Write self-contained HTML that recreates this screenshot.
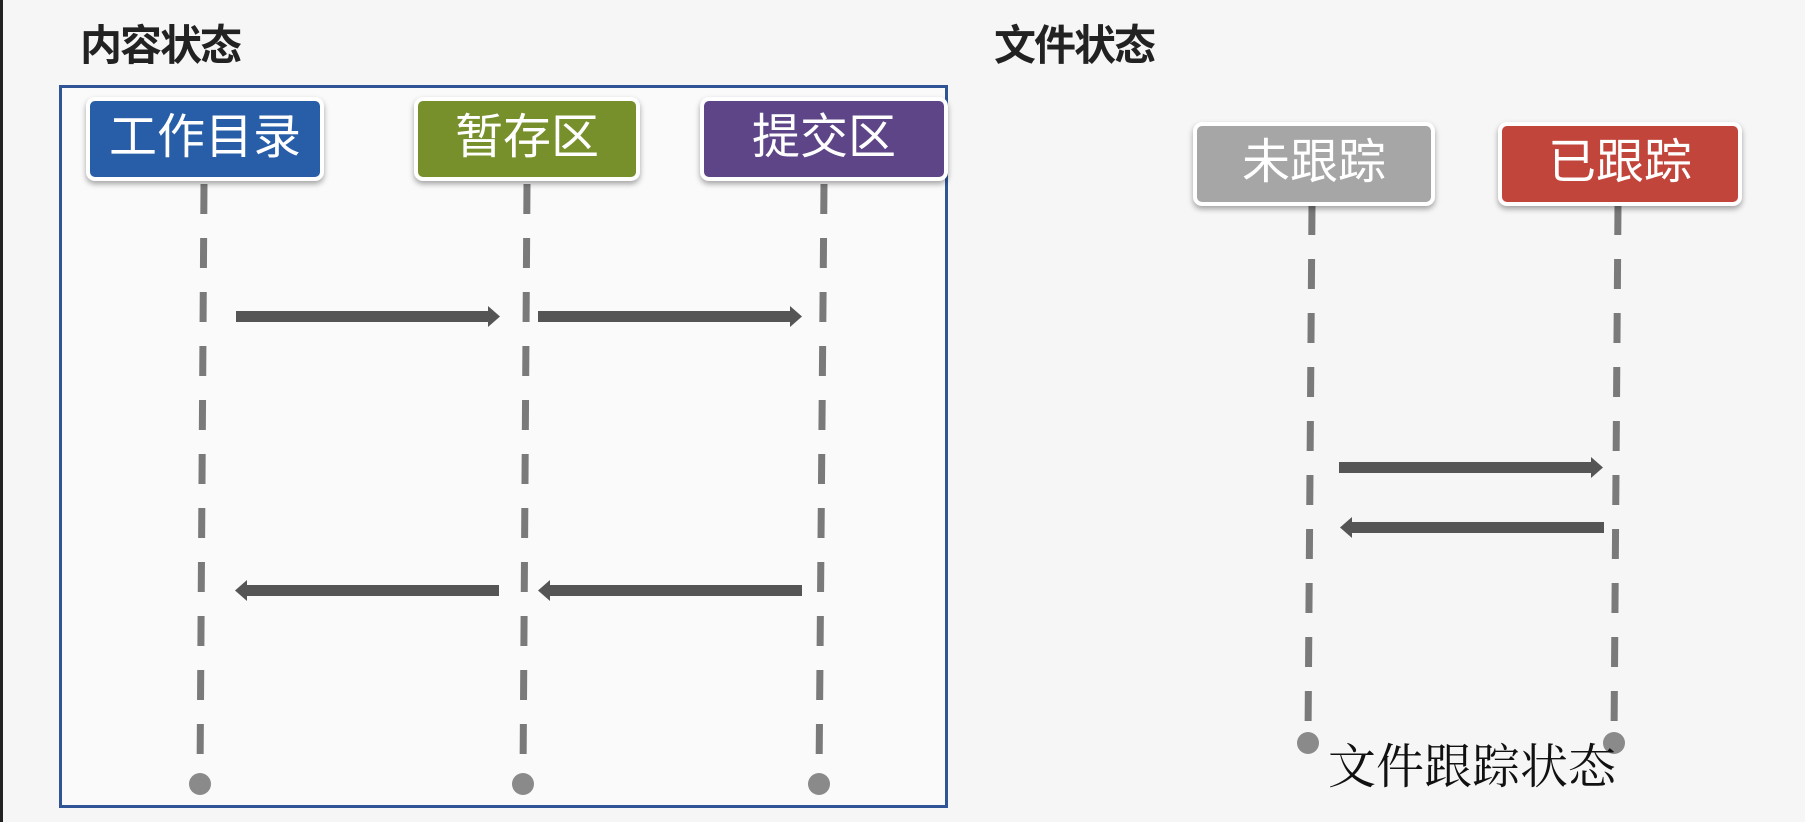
<!DOCTYPE html>
<html><head><meta charset="utf-8"><style>
html,body{margin:0;padding:0}
body{width:1805px;height:822px;background:#f6f6f6;position:relative;overflow:hidden;font-family:"Liberation Sans","Noto Sans CJK SC",sans-serif}
.t{position:absolute;font-weight:bold;font-size:42px;color:#222;top:12px;letter-spacing:-2px}
.frame{position:absolute;left:59px;top:85px;width:883px;height:717px;border:3px solid #2f5597;background:#fafafa}
.b{position:absolute;border:4px solid #fff;border-radius:9px;box-shadow:0 3px 6px rgba(0,0,0,.35);color:#fff;font-size:48px;text-align:center;box-sizing:border-box}
.cap{position:absolute;left:1328px;top:728px;font-family:"Liberation Serif","Noto Serif CJK SC",serif;font-size:48px;color:#111}
</style></head><body>
<div style="position:absolute;left:0;top:0;width:3px;height:822px;background:#222"></div>
<div class="t" style="left:80px">内容状态</div>
<div class="t" style="left:994px">文件状态</div>
<div class="frame"></div>
<svg width="1805" height="822" style="position:absolute;left:0;top:0">
<g stroke="#7a7a7a" stroke-width="7" stroke-dasharray="30,24" fill="none">
<line x1="204" y1="184" x2="200" y2="778"/>
<line x1="527" y1="184" x2="523" y2="778"/>
<line x1="824" y1="184" x2="819" y2="778"/>
<line x1="1312" y1="205" x2="1308" y2="738"/>
<line x1="1618" y1="205" x2="1614" y2="738"/>
</g>
<g fill="#8a8a8a">
<circle cx="200" cy="784" r="11"/><circle cx="523" cy="784" r="11"/><circle cx="819" cy="784" r="11"/>
<circle cx="1308" cy="743" r="11"/><circle cx="1614" cy="743" r="11"/>
</g>
<g fill="#555">
<rect x="236" y="311" width="254" height="11"/><polygon points="488,306 500,316.5 488,327"/>
<rect x="538" y="311" width="254" height="11"/><polygon points="790,306 802,316.5 790,327"/>
<rect x="245" y="585" width="254" height="11"/><polygon points="247,580 235,590.5 247,601"/>
<rect x="548" y="585" width="254" height="11"/><polygon points="550,580 538,590.5 550,601"/>
<rect x="1339" y="462" width="254" height="11"/><polygon points="1591,457 1603,467.5 1591,478"/>
<rect x="1350" y="522" width="254" height="11"/><polygon points="1352,517 1340,527.5 1352,538"/>
</g>
</svg>
<div class="b" style="left:86px;top:97px;width:238px;height:84px;background:#285ea8;line-height:74px">工作目录</div>
<div class="b" style="left:414px;top:97px;width:226px;height:84px;background:#77902c;line-height:74px">暂存区</div>
<div class="b" style="left:700px;top:97px;width:248px;height:84px;background:#5d4588;line-height:74px">提交区</div>
<div class="b" style="left:1193px;top:122px;width:242px;height:84px;background:#a6a6a6;line-height:74px">未跟踪</div>
<div class="b" style="left:1498px;top:122px;width:244px;height:84px;background:#c1453a;line-height:74px">已跟踪</div>
<div class="cap">文件跟踪状态</div>
</body></html>
